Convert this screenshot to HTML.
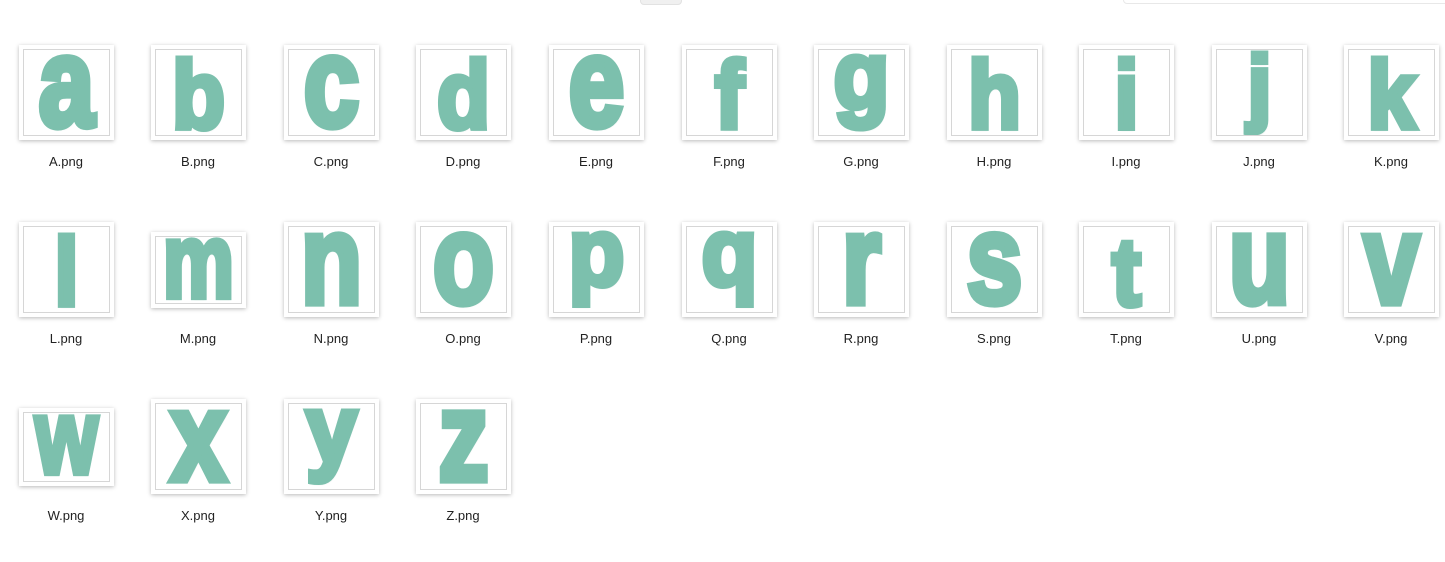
<!DOCTYPE html>
<html><head><meta charset="utf-8"><style>
html,body{margin:0;padding:0;background:#fff;width:1445px;height:562px;overflow:hidden;position:relative;font-family:"Liberation Sans",sans-serif}
.c{position:absolute;width:95px;height:95px;background:#fff;box-shadow:0 1px 4px rgba(0,0,0,.28);box-sizing:border-box}
.c i{position:absolute;left:4px;top:4px;right:4px;bottom:4px;border:1px solid #d6d6d6;overflow:hidden;font-style:normal}
.c b{position:absolute;left:-20px;right:-20px;text-align:center;display:block;height:1em;line-height:1em;font-weight:bold;color:#7cc0ad;-webkit-text-stroke:6px #7cc0ad;text-shadow:0 0 2px #4f9583,0 0 1px #4f9583,1px 2px 2px rgba(40,100,85,.4);transform-origin:50% 0.8465em}
.x b{font-size:105px;top:calc(77px - 88.9px);transform:scale(.95,1.2)}
.a b{font-size:96px;top:calc(79px - 81.3px);transform:scale(.9,1.0)}
.d b{font-size:96px;top:calc(59px - 81.3px);transform:scale(.95,1.0)}
.j b{font-size:84px;top:calc(65px - 71.1px);transform:scale(1,1)}
.s b{font-size:100px;top:calc(61px - 84.6px);transform:scale(.8,1.05)}
.l{position:absolute;width:132px;text-align:center;font-size:13px;color:#222}
.tb1{position:absolute;left:640px;top:-6px;width:40px;height:9px;border-radius:4px;background:#f0f0f0;border:1px solid #e2e2e2}
.tb2{position:absolute;left:1123px;top:-6px;width:330px;height:8px;border-radius:4px;border:1px solid #e8e8e8}
</style></head><body>
<div class="tb1"></div><div class="tb2"></div>

<div class="c x" style="left:19px;top:45px"><i><b>a</b></i></div><div class="l" style="left:0px;top:154px">A.png</div>
<div class="c a" style="left:151px;top:45px"><i><b>b</b></i></div><div class="l" style="left:132px;top:154px">B.png</div>
<div class="c x" style="left:284px;top:45px"><i><b>c</b></i></div><div class="l" style="left:265px;top:154px">C.png</div>
<div class="c a" style="left:416px;top:45px"><i><b>d</b></i></div><div class="l" style="left:397px;top:154px">D.png</div>
<div class="c x" style="left:549px;top:45px"><i><b>e</b></i></div><div class="l" style="left:530px;top:154px">E.png</div>
<div class="c a" style="left:682px;top:45px"><i><b>f</b></i></div><div class="l" style="left:663px;top:154px">F.png</div>
<div class="c d" style="left:814px;top:45px"><i><b>g</b></i></div><div class="l" style="left:795px;top:154px">G.png</div>
<div class="c a" style="left:947px;top:45px"><i><b>h</b></i></div><div class="l" style="left:928px;top:154px">H.png</div>
<div class="c a" style="left:1079px;top:45px"><i><b>i</b></i></div><div class="l" style="left:1060px;top:154px">I.png</div>
<div class="c j" style="left:1212px;top:45px"><i><b>j</b></i></div><div class="l" style="left:1193px;top:154px">J.png</div>
<div class="c a" style="left:1344px;top:45px"><i><b>k</b></i></div><div class="l" style="left:1325px;top:154px">K.png</div>

<div class="c a" style="left:19px;top:222px"><i><b>l</b></i></div><div class="l" style="left:0px;top:331px">L.png</div>
<div class="c s" style="left:151px;top:232px;height:76px"><i><b>m</b></i></div><div class="l" style="left:132px;top:331px">M.png</div>
<div class="c x" style="left:284px;top:222px"><i><b>n</b></i></div><div class="l" style="left:265px;top:331px">N.png</div>
<div class="c x" style="left:416px;top:222px"><i><b>o</b></i></div><div class="l" style="left:397px;top:331px">O.png</div>
<div class="c d" style="left:549px;top:222px"><i><b>p</b></i></div><div class="l" style="left:530px;top:331px">P.png</div>
<div class="c d" style="left:682px;top:222px"><i><b>q</b></i></div><div class="l" style="left:663px;top:331px">Q.png</div>
<div class="c x" style="left:814px;top:222px"><i><b>r</b></i></div><div class="l" style="left:795px;top:331px">R.png</div>
<div class="c x" style="left:947px;top:222px"><i><b>s</b></i></div><div class="l" style="left:928px;top:331px">S.png</div>
<div class="c a" style="left:1079px;top:222px"><i><b>t</b></i></div><div class="l" style="left:1060px;top:331px">T.png</div>
<div class="c x" style="left:1212px;top:222px"><i><b>u</b></i></div><div class="l" style="left:1193px;top:331px">U.png</div>
<div class="c x" style="left:1344px;top:222px"><i><b>v</b></i></div><div class="l" style="left:1325px;top:331px">V.png</div>

<div class="c s" style="left:19px;top:408px;height:78px"><i><b>w</b></i></div><div class="l" style="left:0px;top:508px">W.png</div>
<div class="c x" style="left:151px;top:399px"><i><b>x</b></i></div><div class="l" style="left:132px;top:508px">X.png</div>
<div class="c d" style="left:284px;top:399px"><i><b>y</b></i></div><div class="l" style="left:265px;top:508px">Y.png</div>
<div class="c x" style="left:416px;top:399px"><i><b>z</b></i></div><div class="l" style="left:397px;top:508px">Z.png</div>
</body></html>
